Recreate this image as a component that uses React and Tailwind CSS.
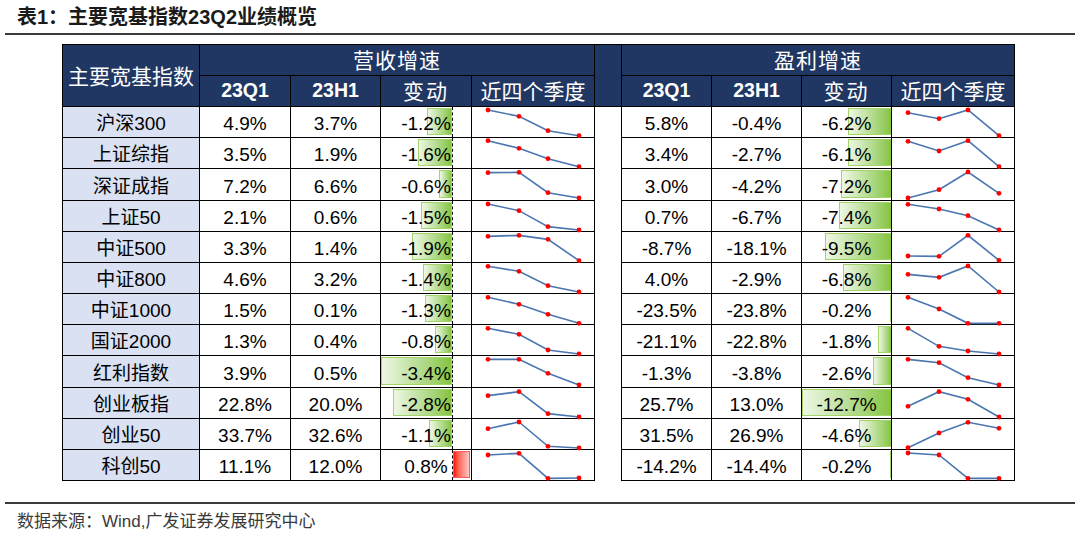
import React from 'react';

const COLS = 'grid grid-cols-[138px_91px_90px_91px_123px_27px_90px_90px_90px_123px] grid-rows-[100%]';

// name, 营收 [23Q1, 23H1, 变动, spark], 盈利 [23Q1, 23H1, 变动, spark]
const rows = [
    ['沪深300', ['4.9%', '3.7%', -1.2, [9, 28, 71, 86]], ['5.8%', '-0.4%', -6.2, [17, 35, 9, 86]]],
    ['上证综指', ['3.5%', '1.9%', -1.6, [8, 31, 62, 86]], ['3.4%', '-2.7%', -6.1, [10, 39, 8, 86]]],
    ['深证成指', ['7.2%', '6.6%', -0.6, [11, 10, 71, 87]], ['3.0%', '-4.2%', -7.2, [87, 62, 9, 73]]],
    ['上证50', ['2.1%', '0.6%', -1.5, [9, 29, 77, 87]], ['0.7%', '-6.7%', -7.4, [10, 24, 44, 87]]],
    ['中证500', ['3.3%', '1.4%', -1.9, [13, 10, 22, 86]], ['-8.7%', '-18.1%', -9.5, [72, 73, 10, 85]]],
    ['中证800', ['4.6%', '3.2%', -1.4, [10, 25, 68, 87]], ['4.0%', '-2.9%', -6.8, [34, 43, 9, 87]]],
    ['中证1000', ['1.5%', '0.1%', -1.3, [10, 31, 61, 88]], ['-23.5%', '-23.8%', -0.2, [10, 45, 88, 88]]],
    ['国证2000', ['1.3%', '0.4%', -0.8, [10, 28, 75, 87]], ['-21.1%', '-22.8%', -1.8, [10, 64, 78, 87]]],
    ['红利指数', ['3.9%', '0.5%', -3.4, [10, 10, 52, 87]], ['-1.3%', '-3.8%', -2.6, [10, 20, 65, 87]]],
    ['创业板指', ['22.8%', '20.0%', -2.8, [23, 11, 77, 87]], ['25.7%', '13.0%', -12.7, [55, 11, 34, 87]]],
    ['创业50', ['33.7%', '32.6%', -1.1, [29, 9, 82, 87]], ['31.5%', '26.9%', -4.6, [86, 42, 10, 28]]],
    ['科创50', ['11.1%', '12.0%', 0.8, [15, 10, 85, 84]], ['-14.2%', '-14.4%', -0.2, [9, 15, 85, 85]]],
];

const fmt = (v) => v.toFixed(1) + '%';

function Spark({ pts }) {
    const xs = [16, 47, 76, 107];
    const ys = pts.map((p) => p / 3);
    const d = xs.map((x, i) => `${i ? 'L' : 'M'}${x} ${ys[i]}`).join(' ');
    return (
        <svg width="122" height="30" className="block overflow-visible">
            <path d={d} fill="none" stroke="#4a76b0" strokeWidth="1.6" />
            {xs.map((x, i) => (
                <circle key={i} cx={x} cy={ys[i]} r="2.4" fill="#ff0000" />
            ))}
        </svg>
    );
}

function RevChange({ v }) {
    return (
        <div className="grid min-h-0 border-r border-b border-black">
            <div className="[grid-area:1/1] flex">
                <div className="w-[72px] h-full border-r border-dashed border-black flex justify-end pt-[1px] pb-[2px]">
                    {v < 0 && (
                        <div
                            className="h-full bg-gradient-to-r from-[#eef7e4] to-[#86c43c] border border-[#a3d46a]"
                            style={{ width: Math.abs(v) * 21 }}
                        />
                    )}
                </div>
                <div className="flex-1 flex pt-[1px] pb-[2px]">
                    {v > 0 && (
                        <div
                            className="h-full bg-gradient-to-r from-[#ff0000] to-[#ffc4c4] border border-[#ff5a5a]"
                            style={{ width: v * 21 }}
                        />
                    )}
                </div>
            </div>
            <div className="[grid-area:1/1] flex items-center justify-center leading-none pt-[3px]">{fmt(v)}</div>
        </div>
    );
}

function ProfitChange({ v }) {
    return (
        <div className="grid min-h-0 border-r border-b border-black">
            <div className="[grid-area:1/1] flex justify-end pt-[1px] pb-[2px]">
                <div
                    className="h-full bg-gradient-to-r from-[#eef7e4] to-[#86c43c] border-y border-l border-[#a3d46a]"
                    style={{ width: Math.abs(v) * 7 }}
                />
            </div>
            <div className="[grid-area:1/1] flex items-center justify-center leading-none pt-[3px]">{fmt(v)}</div>
        </div>
    );
}

const cell = 'min-h-0 border-r border-b border-black flex items-center justify-center leading-none pt-[3px]';
const hcell = 'bg-[#203764] border-r border-b border-black flex items-center justify-center text-white leading-none';

function App() {
    return (
        <div
            className="w-[1080px] h-[536px] bg-white text-black overflow-hidden"
            style={{ fontFamily: '"Liberation Sans", "Noto Sans CJK SC", sans-serif' }}
        >
            <div className="h-[35px] mx-[5px] border-b-2 border-[#3a3a3a] flex items-center pl-[12px] pt-[1px]">
                <span className="text-[20px] font-bold text-[#1a1a1a] leading-none">表1：主要宽基指数23Q2业绩概览</span>
            </div>

            <div className="ml-[62px] mt-[9px] w-[953px]">
                <div className="grid grid-cols-[138px_91px_90px_91px_123px_27px_90px_90px_90px_123px] grid-rows-[32px_31px]">
                    <div className={`${hcell} row-span-2 border-l border-t text-[21px] pt-[2px]`}>主要宽基指数</div>
                    <div className={`${hcell} col-span-4 border-t text-[21px] tracking-[1px]`}>营收增速</div>
                    <div className={`${hcell} row-span-2 border-t`} />
                    <div className={`${hcell} col-span-4 border-t text-[21px] tracking-[1px]`}>盈利增速</div>
                    <div className={`${hcell} text-[19.5px] font-bold`}>23Q1</div>
                    <div className={`${hcell} text-[19.5px] font-bold`}>23H1</div>
                    <div className={`${hcell} text-[21px] tracking-[2px]`}>变动</div>
                    <div className={`${hcell} text-[21px]`}>近四个季度</div>
                    <div className={`${hcell} text-[19.5px] font-bold`}>23Q1</div>
                    <div className={`${hcell} text-[19.5px] font-bold`}>23H1</div>
                    <div className={`${hcell} text-[21px] tracking-[2px]`}>变动</div>
                    <div className={`${hcell} text-[21px]`}>近四个季度</div>
                </div>

                {rows.map(([name, rev, pro], i) => (
                    <div key={name} className={`${COLS} ${i === 2 || i === 8 ? 'h-[32px]' : 'h-[31px]'} text-[19px]`}>
                        <div className={`${cell} border-l bg-[#d9e1f2]`}>{name}</div>
                        <div className={cell}>{rev[0]}</div>
                        <div className={cell}>{rev[1]}</div>
                        <RevChange v={rev[2]} />
                        <div className="min-h-0 border-r border-b border-black">
                            <Spark pts={rev[3]} />
                        </div>
                        <div className="border-r border-black" />
                        <div className={cell}>{pro[0]}</div>
                        <div className={cell}>{pro[1]}</div>
                        <ProfitChange v={pro[2]} />
                        <div className="min-h-0 border-r border-b border-black">
                            <Spark pts={pro[3]} />
                        </div>
                    </div>
                ))}
            </div>

            <div className="mt-[21px] mx-[5px] border-t-2 border-[#3a3a3a] pl-[12px] pt-[6px]">
                <span className="text-[17px] text-[#3a3a3a] leading-none">数据来源：Wind,广发证券发展研究中心</span>
            </div>
        </div>
    );
}

export default App;
